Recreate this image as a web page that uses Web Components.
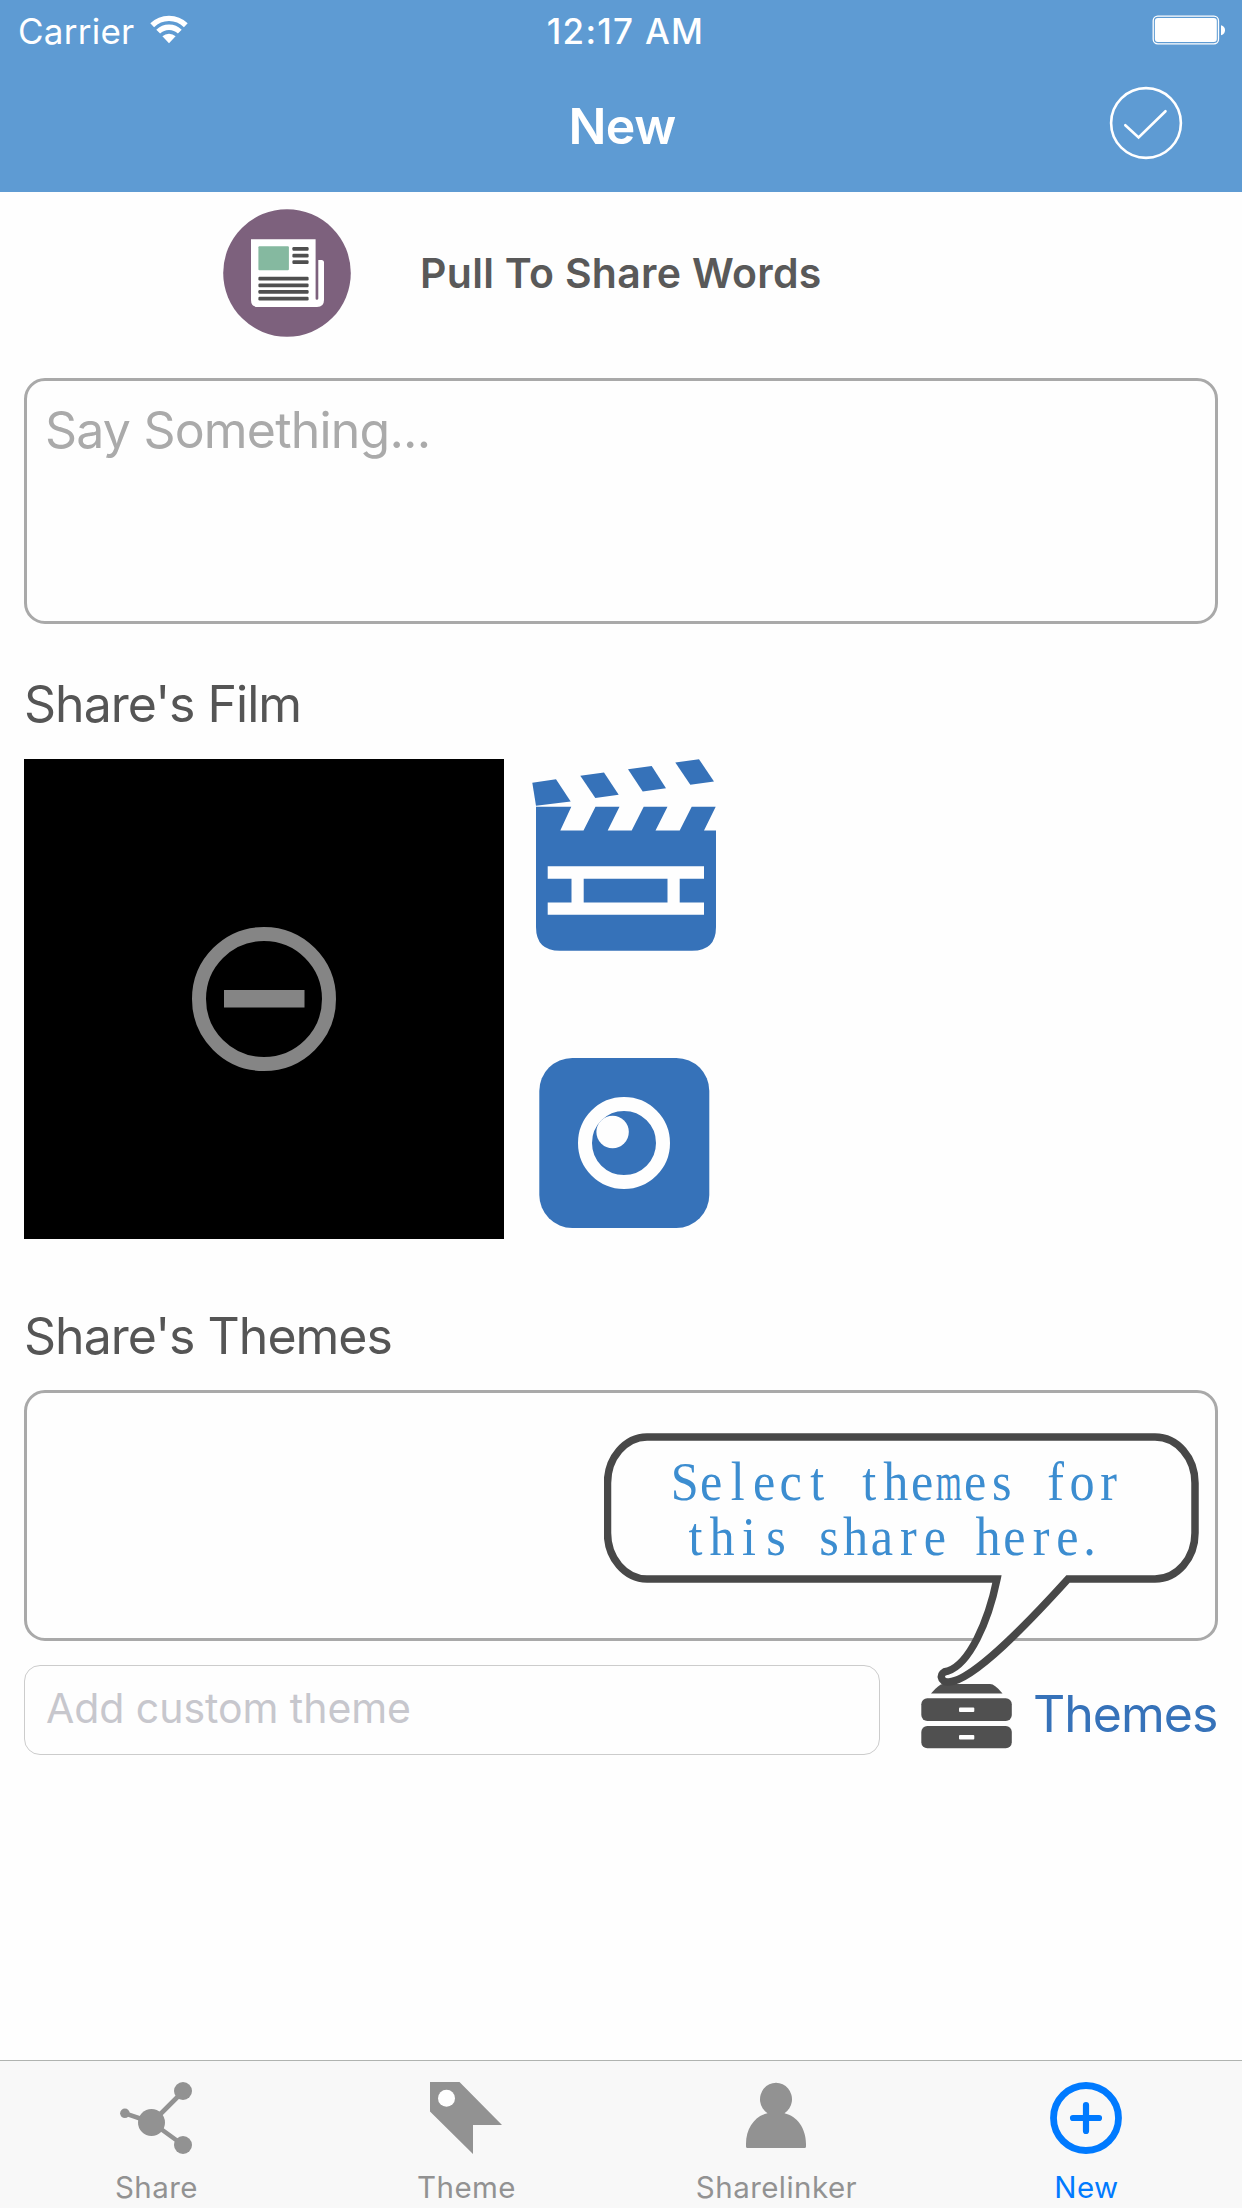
<!DOCTYPE html>
<html lang="en">
<head>
<meta charset="utf-8">
<title>New</title>
<style>
html,body{margin:0;padding:0;background:#fefefe}
body{font-family:Inter,"Liberation Sans",sans-serif}
</style>
</head>
<body>
<share-app></share-app>
<script>
function define(name, html) {
  customElements.define(name, class extends HTMLElement {
    constructor() {
      super();
      this.attachShadow({ mode: 'open' }).innerHTML = html;
    }
  });
}

define('status-bar', `
<style>
:host{display:flex;align-items:center;height:58px;padding:2px 16px 0 18px;color:#fff;font-size:35px;line-height:44px}
.side{flex:1;display:flex;align-items:center}
.right{justify-content:flex-end}
.carrier{letter-spacing:.25px}
.time{font-weight:500;letter-spacing:1.25px;padding-left:7px}
svg{display:block}
.wifi{margin:-4px 0 0 16px}
.battery{margin-top:-2px}
</style>
<div class="side"><span class="carrier">Carrier</span>
<svg class="wifi" width="38" height="29" viewBox="0 0 38 29"><g fill="none" stroke="#fff" stroke-width="5.4"><path d="M2.2 10.2A24 24 0 0 1 35.8 10.2"/><path d="M8.2 16.7A15.3 15.3 0 0 1 29.8 16.7"/></g><path d="M12.4 21.3A9.6 9.6 0 0 1 25.6 21.3L19 28.3Z" fill="#fff"/></svg></div>
<span class="time">12:17 AM</span>
<div class="side right"><svg class="battery" width="74" height="30" viewBox="0 0 74 30"><rect x="1.2" y="1.2" width="65.3" height="27.6" rx="4.5" fill="none" stroke="#fff" stroke-width="1.3"/><rect x="2.9" y="2.9" width="61.9" height="24.2" rx="3" fill="#fff"/><path d="M69 10.3C72 11 73 13 73 15.2S72 19.5 69 20.3Z" fill="#fff"/></svg></div>
`);

define('nav-bar', `
<style>
:host{display:flex;align-items:center;height:132px;padding:0 59px;color:#fff}
.side{flex:1;display:flex;justify-content:flex-end}
.title{font-size:50px;font-weight:600;line-height:60px;letter-spacing:-.5px;padding-left:2px}
svg{display:block;margin-top:-6px}
</style>
<div class="side"></div><div class="title"><slot></slot></div>
<div class="side"><svg width="74" height="74" viewBox="0 0 74 74" fill="none" stroke="#fff" stroke-width="2.6" stroke-linecap="round"><circle cx="37" cy="37" r="34.9"/><path d="M16.3 39.2L29.6 51.5L56.5 25.2"/></svg></div>
`);

define('pull-banner', `
<style>
:host{display:flex;align-items:center;gap:69px;padding:17px 0 0 223px;height:128px;color:#595959}
span{font-size:41px;font-weight:600;line-height:50px;letter-spacing:.3px}
svg{display:block}
</style>
<svg width="128" height="128" viewBox="0 0 128 128">
<circle cx="64" cy="64" r="63.8" fill="#7d617d"/>
<path d="M28 30.3H92.6V51H98.5Q101 51 101 53.5V91Q101 98 94 98H35Q28 98 28 91Z" fill="#fff"/>
<path d="M92.6 51H95.3V89.5Q95.3 90.7 93.9 90.7T92.6 89.5Z" fill="#7d617d"/>
<rect x="35.4" y="37.3" width="30.5" height="24" rx="1" fill="#85b9a0"/>
<g fill="#4f4f4f"><rect x="69.4" y="38" width="16.2" height="3.7" rx="1.2"/><rect x="69.4" y="44.7" width="16.2" height="3.7" rx="1.2"/><rect x="69.4" y="51.3" width="16.2" height="3.7" rx="1.2"/><rect x="35.4" y="67.8" width="50.2" height="3.7" rx="1.2"/><rect x="35.4" y="74.5" width="50.2" height="3.7" rx="1.2"/><rect x="35.4" y="81.1" width="50.2" height="3.7" rx="1.2"/><rect x="35.4" y="87.8" width="50.2" height="3.7" rx="1.2"/></g>
</svg>
<span><slot></slot></span>
`);

define('outlined-box', `
<style>
:host{display:block;box-sizing:border-box;position:relative;border:3px solid #a9a9a9;border-radius:21px;background:#fefefe;padding:19px 18px;color:#aaa;font-size:50px;line-height:60px;letter-spacing:-.8px}
</style><slot></slot>
`);

define('section-label', `
<style>:host{display:block;color:#555;font-size:50px;line-height:60px;letter-spacing:-1px}</style><slot></slot>
`);

define('film-picker', `
<style>
:host{display:flex;height:480px}
.frame{width:480px;background:#000;display:flex;align-items:center;justify-content:center}
.actions{display:flex;flex-direction:column;justify-content:space-between;margin-left:28px;padding-bottom:11px}
svg{display:block}
.camera{margin-left:7px}
</style>
<div class="frame"><svg width="144" height="144" viewBox="0 0 144 144"><circle cx="72" cy="72" r="65" fill="none" stroke="#858585" stroke-width="14"/><rect x="32" y="63" width="80.5" height="17.5" fill="#858585"/></svg></div>
<div class="actions">
<svg width="186" height="192" viewBox="0 0 186 192" fill="#3672b9">
<path d="M0.3 23.7L24 20.3L38.7 42.5L4 46.8Z"/>
<path d="M48.3 16.7L72 13.5L86.7 35.7L63.3 39Z"/>
<path d="M96 10.2L119.7 7L134 29.3L110.7 32.5Z"/>
<path d="M143.3 3.5L167 .2L182 22.5L158.3 25.7Z"/>
<path d="M4 47.7H39.3L28.3 71.5H51.5L63.5 47.7H87.5L75.7 71.5H99.7L111.7 47.7H135.5L123.5 71.5H147.7L159.7 47.7H183.7L172 71.5H184V168Q184 191.8 160 191.8H28Q4 191.8 4 168Z"/>
<path fill="#fefefe" d="M15.7 107.3H172V119.7H147.7V143.5H172V155.7H15.7V143.5H39.5V119.7H15.7Z"/><path d="M51.7 119.7H135.5V143.5H51.7Z"/>
</svg>
<svg class="camera" width="171" height="171" viewBox="0 0 171 171"><rect x=".3" y=".9" width="170" height="170" rx="33" fill="#3672b9"/><circle cx="85" cy="86" r="39" fill="none" stroke="#fefefe" stroke-width="14"/><circle cx="73.6" cy="75" r="16.2" fill="#fefefe"/></svg>
</div>
`);

define('speech-bubble', `
<style>
:host{position:absolute;left:577px;top:37px;width:600px;height:258px}
svg{display:block}
text{font-family:"Liberation Serif",serif;font-size:54px;letter-spacing:0;fill:#3c8dd0;text-anchor:middle}
</style>
<svg width="600" height="258" viewBox="0 0 600 258">
<path d="M43 7H551A40 46 0 0 1 591 53V103A40 46 0 0 1 551 149H464C425 192 370 250 345 252C336 253 334 242 344 241C365 234 384 193 393 149H43A40 46 0 0 1 3.5 103V53A40 46 0 0 1 43 7Z" fill="#fefefe" stroke="#484848" stroke-width="7.5"/>
<g transform="scale(.93 1)">
<text y="70" x="86.8 115.3 143.8 172.3 200.8 229.3 257.7 285.2 313.7 342.2 370.7 399.2 427.7 456.2 485.7 514.1 542.6"><tspan>Select the</tspan><tspan textLength="28" lengthAdjust="spacingAndGlyphs">m</tspan><tspan>es for</tspan></text>
<text y="125" x="98.500 127 156 185 213.5 241.9 270.4 298.9 327.4 355.9 384.4 412.9 441.4 469.9 498.3 522">this share here.</text>
</g>
</svg>
`);

define('theme-row', `
<style>
:host{display:flex;height:90px}
.input{box-sizing:border-box;flex:0 0 856px;border:1px solid #ccc;border-radius:16px;padding:17px 0 0 21px;color:#c7c7cd;font-size:41px;line-height:50px;letter-spacing:-.05px}
svg{display:block;flex:none;margin:19px 0 0 41px}
.link{margin:19px 0 0 20px;color:#3672b9;font-size:50px;line-height:60px;letter-spacing:-1px}
</style>
<div class="input">Add custom theme</div>
<svg width="92" height="65" viewBox="0 0 92 65"><path d="M10 9.5Q18 0 22 0H69Q74 0 81.5 9.5Z" fill="#505050"/><g fill="#505050"><rect x=".3" y="14.3" width="90.5" height="22.6" rx="6"/><rect x=".3" y="42" width="90.5" height="22.3" rx="6"/></g><g fill="#fefefe"><rect x="38" y="23.5" width="15.3" height="4.4" rx="1"/><rect x="38" y="51" width="15.3" height="4.4" rx="1"/></g></svg>
<span class="link">Themes</span>
`);

define('tab-item', `
<style>
:host{flex:1;display:flex;flex-direction:column;align-items:center;color:#929292;font-size:29.5px;line-height:36px;letter-spacing:.45px;padding-top:21px;gap:15px}
:host([active]){color:#007aff}
span{padding-left:1px}
::slotted(svg){display:block;width:72px;height:72px}
</style>
<slot name="icon"></slot><span><slot></slot></span>
`);

define('tab-bar', `
<style>
:host{display:flex;box-sizing:border-box;height:148px;padding:0 1px;border-top:1px solid #b0b3b0;background:#f8f8f8}
</style>
<tab-item><svg slot="icon" viewBox="0 0 72 72" fill="currentColor"><path d="M5 31.4L32 40.5L63 9.5M32 40.5L63 63" fill="none" stroke="currentColor" stroke-width="4.6"/><circle cx="4.9" cy="31.3" r="4.8"/><circle cx="31.5" cy="40.5" r="13.5"/><circle cx="63" cy="9" r="9"/><circle cx="63" cy="63" r="9"/></svg>Share</tab-item>
<tab-item><svg slot="icon" viewBox="0 0 72 72"><path d="M0 0H29.5L72 43H43V72L0 29.5Z" fill="currentColor"/><circle cx="16.5" cy="16.3" r="8.5" fill="#fefefe"/></svg>Theme</tab-item>
<tab-item><svg slot="icon" viewBox="0 0 72 72" fill="currentColor"><path d="M27.5 31.2A16 16.5 0 1 1 44.5 31.2C57 34 66 46 66 62V64.5Q66 66 64.5 66H7.5Q6 66 6 64.5V62C6 46 15 34 27.5 31.2Z"/></svg>Sharelinker</tab-item>
<tab-item active><svg slot="icon" viewBox="0 0 72 72" fill="none" stroke="currentColor"><circle cx="36" cy="36" r="32.5" stroke-width="6.8"/><path d="M23 36H49M36 23V49" stroke-width="6.2" stroke-linecap="round"/></svg>New</tab-item>
`);

define('share-app', `
<style>
:host{display:flex;flex-direction:column;width:1242px;height:2208px;background:#fefefe;overflow:hidden}
header{background:#5e9bd3}
main{padding:41px 24px 0;display:flex;flex-direction:column}
.say{height:246px}
.l1{margin:50px 0 25px 0}
.l2{margin:67px 0 24px 0}
.themes{height:251px;margin-bottom:24px}
tab-bar{margin-top:auto}
</style>
<header><status-bar></status-bar><nav-bar>New</nav-bar></header>
<pull-banner>Pull To Share Words</pull-banner>
<main>
<outlined-box class="say">Say Something...</outlined-box>
<section-label class="l1">Share's Film</section-label>
<film-picker></film-picker>
<section-label class="l2">Share's Themes</section-label>
<outlined-box class="themes"><speech-bubble></speech-bubble></outlined-box>
<theme-row></theme-row>
</main>
<tab-bar></tab-bar>
`);
</script>
</body>
</html>
